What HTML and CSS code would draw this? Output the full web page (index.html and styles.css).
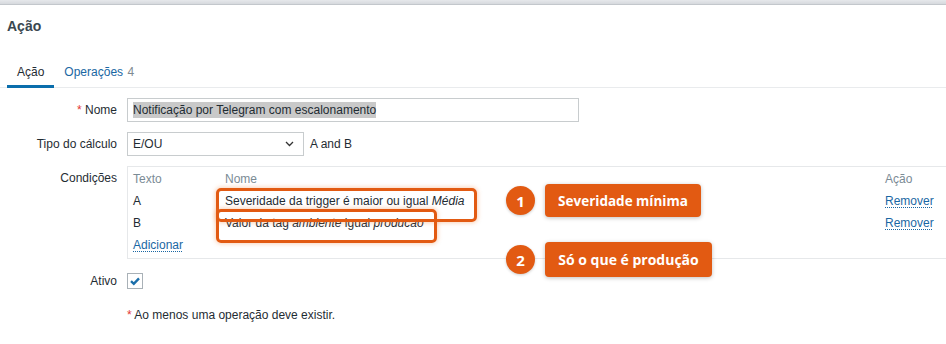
FILE: index.html
```html
<!DOCTYPE html>
<html lang="pt">
<head>
<meta charset="utf-8">
<link rel="stylesheet" href="styles.css">
</head>
<body>
<div class="page">
  <div class="topbar"></div>
  <h1 class="title">Ação</h1>
  <ul class="tabs">
    <li class="tab active">Ação</li>
    <li class="tab"><span class="tab-link">Operações</span> <span class="count">4</span></li>
  </ul>
  <div class="form">
    <label class="lbl"><span class="req">*</span> Nome</label>
    <div class="field">
      <div class="input"><span class="sel">Notificação por Telegram com escalonamento</span></div>
    </div>

    <label class="lbl">Tipo do cálculo</label>
    <div class="field row">
      <div class="select">
        <span>E/OU</span>
        <svg class="chev" width="9" height="6" viewBox="0 0 9 6"><path d="M1 1 L4.5 4.5 L8 1" fill="none" stroke="#333" stroke-width="1.3"/></svg>
      </div>
      <span class="expr">A and B</span>
    </div>

    <label class="lbl">Condições</label>
    <div class="field">
      <div class="cond">
        <div class="cgrid">
          <div class="th">Texto</div><div class="th">Nome</div><div class="th">Ação</div>
          <div>A</div><div>Severidade da trigger é maior ou igual <i>Média</i></div><div><a class="link">Remover</a></div>
          <div>B</div><div>Valor da tag <i>ambiente</i> igual <i>producao</i></div><div><a class="link">Remover</a></div>
          <div><a class="link">Adicionar</a></div><div></div><div></div>
        </div>
        <div class="mark mark1"></div>
        <div class="mark mark2"></div>
      </div>
    </div>

    <label class="lbl">Ativo</label>
    <div class="field">
      <div class="check">
        <svg width="14" height="14" viewBox="0 0 14 14"><path d="M3 7.2 L5.8 9.8 L11 4.4" fill="none" stroke="#1b6fab" stroke-width="2.4" stroke-linejoin="miter"/></svg>
      </div>
    </div>

    <div></div>
    <div class="field note"><span class="req">*</span> Ao menos uma operação deve existir.</div>
  </div>

  <div class="callout callout1"><span class="num">1</span><span class="tag tag1">Severidade mínima</span></div>
  <div class="callout callout2"><span class="num">2</span><span class="tag tag2">Só o que é produção</span></div>
</div>
</body>
</html>
```

FILE: styles.css
```css
* { box-sizing: border-box; }
html, body { margin: 0; padding: 0; background: #fff; }
body {
  width: 946px;
  height: 344px;
  overflow: hidden;
  font-family: "Liberation Sans", Arial, sans-serif;
  font-size: 12px;
  color: #1f2c33;
}
.page { position: relative; width: 946px; height: 344px; }
.topbar {
  height: 5px;
  background: linear-gradient(#e6e8eb, #d6d9dd);
  border-bottom: 1px solid #c3c7cc;
}
.title {
  margin: 12px 0 0 7px;
  font-size: 14px;
  line-height: 18px;
  font-weight: bold;
  color: #3a4750;
}
.tabs {
  list-style: none;
  margin: 22px 0 0 0;
  padding: 0 0 0 7px;
  display: flex;
  border-bottom: 1px solid #e9ebed;
}
.tab {
  padding: 8px 10px 6px;
  line-height: 14px;
  border-bottom: 3px solid transparent;
  margin-bottom: -1px;
}
.tab.active { border-bottom-color: #0a6eac; color: #1f2c33; }
.tab-link { color: #1a67a3; }
.count { color: #7f8a91; margin-left: 1px; }
.form {
  display: grid;
  grid-template-columns: 117px 1fr;
  column-gap: 10px;
  row-gap: 10px;
  padding-top: 10px;
}
.lbl {
  text-align: right;
  line-height: 24px;
  white-space: nowrap;
}
.req { color: #e33734; }
.field.row { display: flex; align-items: center; gap: 6px; }
.input {
  width: 452px;
  height: 24px;
  border: 1px solid #c8ccce;
  padding: 0 5px;
  display: flex;
  align-items: center;
}
.sel { background: #c9c9c9; padding: 1px 0; }
.select {
  width: 177px;
  height: 24px;
  border: 1px solid #c8ccce;
  padding: 0 5px;
  display: flex;
  align-items: center;
  justify-content: space-between;
}
.chev { margin-right: 4px; }
.cond {
  position: relative;
  border: 1px solid #e6e8ea;
  margin-right: -3px;
  padding: 1px 5px 2px;
}
.cgrid {
  display: grid;
  grid-template-columns: 92px 1fr 58px;
  grid-auto-rows: 22px;
  align-items: center;
}
.th { color: #7b8b95; }
.link {
  color: #1a67a3;
  text-decoration: underline dotted;
  text-underline-offset: 2px;
  text-decoration-thickness: 1px;
}
.mark {
  position: absolute;
  border: 3px solid #e25a12;
  border-radius: 5px;
  box-shadow: 0 0 4px 1px rgba(240, 130, 60, 0.35);
}
.mark1 { left: 88px; top: 21px; width: 261px; height: 34px; }
.mark2 { left: 88px; top: 42px; width: 221px; height: 34px; }
.check {
  margin-top: 4px;
  width: 16px;
  height: 16px;
  border: 1px solid #a9b1b7;
  display: flex;
  align-items: center;
  justify-content: center;
}
.note { line-height: 24px; }
.callout {
  position: absolute;
  left: 506px;
  display: flex;
  align-items: center;
  gap: 10px;
  font-family: "Open Sans", "Noto Sans", sans-serif;
  font-weight: 700;
  color: #fff;
}
.callout1 { top: 184px; }
.callout2 { top: 242px; }
.num {
  width: 29px;
  height: 29px;
  border-radius: 50%;
  background: #e25a12;
  display: flex;
  align-items: center;
  justify-content: center;
  font-size: 15px;
  box-shadow: 0 1px 3px rgba(0, 0, 0, 0.2);
}
.tag {
  height: 33px;
  background: #e25a12;
  border-radius: 4px;
  display: flex;
  align-items: center;
  justify-content: center;
  font-size: 14px;
  box-shadow: 0 1px 4px rgba(0, 0, 0, 0.25);
}
.tag1 { width: 156px; font-size: 13.5px; }
.tag2 { width: 167px; height: 35px; }
```
